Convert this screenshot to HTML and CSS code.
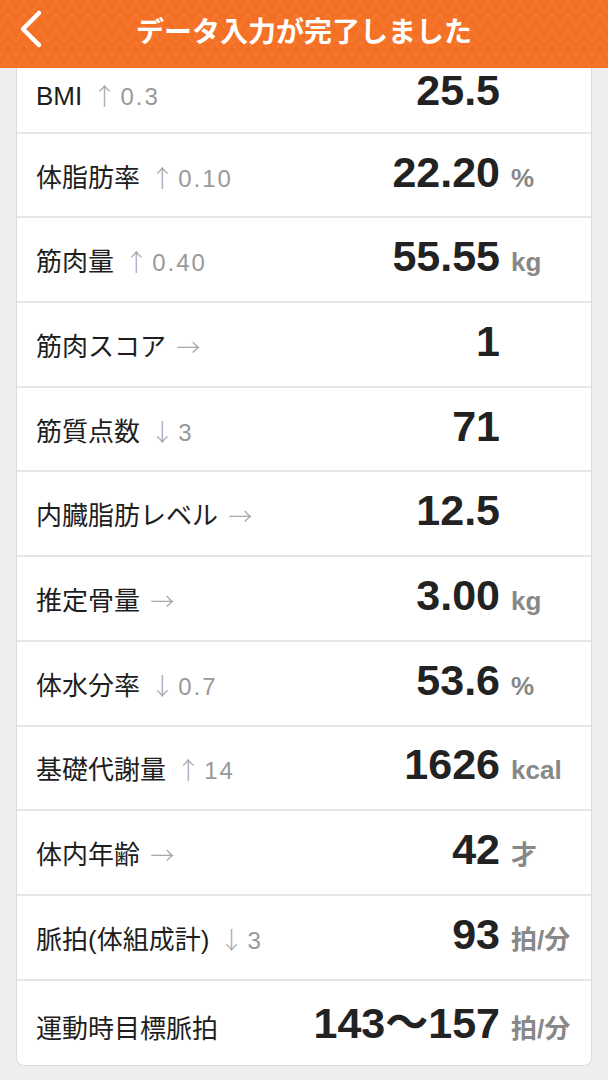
FILE: index.html
```html
<!DOCTYPE html>
<html lang="ja">
<head>
    <meta charset="UTF-8">
    <meta name="viewport" content="width=device-width, initial-scale=1.0">
    <title>データ入力が完了しました</title>
    <link rel="stylesheet" href="styles.css">
</head>
<body>
    <header class="nav-bar">
        <svg class="nav-pattern" width="608" height="68" aria-hidden="true">
            <defs>
                <pattern id="tri" width="16" height="14" patternUnits="userSpaceOnUse">
                    <path d="M0 14 L8 0 L16 14 M0 14 H16" fill="none" stroke="#f8894a" stroke-width="1" opacity="0.55"/>
                </pattern>
            </defs>
            <rect width="608" height="68" fill="url(#tri)"/>
        </svg>
        <button class="back-btn" aria-label="戻る">
            <svg width="30" height="40" viewBox="0 0 30 40">
                <polyline points="21,4 5,20 21,36" fill="none" stroke="#fff" stroke-width="4.5" stroke-linecap="round" stroke-linejoin="round"/>
            </svg>
        </button>
        <h1 class="nav-title">データ入力が完了しました</h1>
    </header>

    <main class="content">
        <div class="result-card">
            <div class="row">
                <div class="label">BMI <span class="arrow">↑</span><span class="delta">0.3</span></div>
                <div class="value">25.5</div>
                <div class="unit"></div>
            </div>
            <div class="row">
                <div class="label">体脂肪率 <span class="arrow">↑</span><span class="delta">0.10</span></div>
                <div class="value">22.20</div>
                <div class="unit">%</div>
            </div>
            <div class="row">
                <div class="label">筋肉量 <span class="arrow">↑</span><span class="delta">0.40</span></div>
                <div class="value">55.55</div>
                <div class="unit">kg</div>
            </div>
            <div class="row">
                <div class="label">筋肉スコア <span class="arrow">→</span></div>
                <div class="value">1</div>
                <div class="unit"></div>
            </div>
            <div class="row">
                <div class="label">筋質点数 <span class="arrow">↓</span><span class="delta">3</span></div>
                <div class="value">71</div>
                <div class="unit"></div>
            </div>
            <div class="row">
                <div class="label">内臓脂肪レベル <span class="arrow">→</span></div>
                <div class="value">12.5</div>
                <div class="unit"></div>
            </div>
            <div class="row">
                <div class="label">推定骨量 <span class="arrow">→</span></div>
                <div class="value">3.00</div>
                <div class="unit">kg</div>
            </div>
            <div class="row">
                <div class="label">体水分率 <span class="arrow">↓</span><span class="delta">0.7</span></div>
                <div class="value">53.6</div>
                <div class="unit">%</div>
            </div>
            <div class="row">
                <div class="label">基礎代謝量 <span class="arrow">↑</span><span class="delta">14</span></div>
                <div class="value">1626</div>
                <div class="unit">kcal</div>
            </div>
            <div class="row">
                <div class="label">体内年齢 <span class="arrow">→</span></div>
                <div class="value">42</div>
                <div class="unit">才</div>
            </div>
            <div class="row">
                <div class="label">脈拍(体組成計) <span class="arrow">↓</span><span class="delta">3</span></div>
                <div class="value">93</div>
                <div class="unit">拍/分</div>
            </div>
            <div class="row">
                <div class="label">運動時目標脈拍</div>
                <div class="value">143〜157</div>
                <div class="unit">拍/分</div>
            </div>
        </div>
    </main>
</body>
</html>
```

FILE: styles.css
```css
body {
    font-family: 'Liberation Sans', 'Noto Sans CJK JP', sans-serif;
    margin: 0;
    padding: 0;
    background-color: #eeeeee;
    color: #222;
}

.nav-bar {
    position: fixed;
    top: 0;
    left: 0;
    right: 0;
    height: 68px;
    background-color: #f37024;
    display: flex;
    align-items: center;
    justify-content: center;
    z-index: 10;
    overflow: hidden;
}

.nav-pattern {
    position: absolute;
    top: 0;
    left: 0;
}

.back-btn {
    position: absolute;
    left: 18px;
    top: 9px;
    padding: 0;
    background: none;
    border: none;
    cursor: pointer;
}

.nav-title {
    position: relative;
    margin: 0 0 8px;
    font-family: 'Noto Sans CJK JP', sans-serif;
    font-size: 28px;
    font-weight: 700;
    color: #fff;
}

.content {
    padding: 49px 16px 40px;
}

.result-card {
    background: #fff;
    border: 1px solid #dcdcdc;
    border-top: none;
    border-radius: 0 0 8px 8px;
}

.row {
    box-sizing: border-box;
    display: grid;
    grid-template-columns: 1fr auto 91px;
    align-content: center;
    align-items: baseline;
    height: 84.7px;
    padding: 0 0 6px 19px;
    border-bottom: 2px solid #e6e6e6;
}

.row:first-child {
    padding-bottom: 0;
}

.row:last-child {
    border-bottom: none;
    padding-bottom: 8px;
}

.label {
    font-size: 26px;
    white-space: nowrap;
    color: #1e1e1e;
}

.arrow {
    font-family: 'Noto Sans CJK JP', sans-serif;
    font-size: 24px;
    color: #a8a8a8;
    font-weight: 300;
    margin-left: 3px;
}

.delta {
    font-size: 24px;
    letter-spacing: 2px;
    color: #999;
    margin-left: 4px;
}

.value {
    font-size: 43px;
    font-weight: 700;
    color: #222;
    text-align: right;
}

.unit {
    padding-left: 11px;
    font-size: 26px;
    font-weight: 700;
    color: #888;
}
```
